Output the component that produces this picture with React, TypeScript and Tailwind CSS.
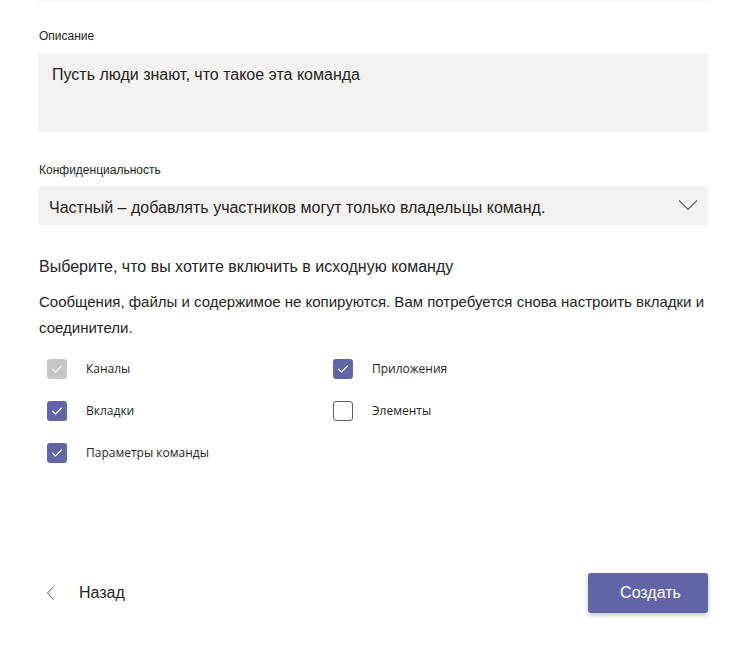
import React from "react";

const Check = ({ color }: { color: string }) => (
  <svg width="12" height="10" viewBox="0 0 12 10" fill="none">
    <path d="M1.5 5.2 L4.5 8 L10.5 2" stroke={color} strokeWidth="1.1" strokeLinecap="round" strokeLinejoin="round" />
  </svg>
);

function Box({ state }: { state: "on" | "off" | "disabled" }) {
  if (state === "on")
    return (
      <div className="w-5 h-5 rounded-[3px] bg-[#6264a7] flex items-center justify-center">
        <Check color="#ffffff" />
      </div>
    );
  if (state === "disabled")
    return (
      <div className="w-5 h-5 rounded-[3px] bg-[#c8c6c4] flex items-center justify-center">
        <Check color="#f3f2f1" />
      </div>
    );
  return <div className="w-5 h-5 rounded-[3px] border border-[#605e5c] bg-white" />;
}

function Item({ state, label }: { state: "on" | "off" | "disabled"; label: string }) {
  return (
    <div className="flex items-center h-5 gap-[19px]">
      <Box state={state} />
      <span className="text-[12px] text-[#252423] font-['Open_Sans',sans-serif]">{label}</span>
    </div>
  );
}

export default function App() {
  return (
    <div className="w-[746px] h-[653px] bg-white relative font-['Liberation_Sans',Arial,sans-serif] text-[#252423]">
      <div className="mx-[38px] h-[3px] bg-[#faf9f8]" />
      <div className="px-[38px]">
        <div className="pt-[25px] text-[12px] leading-[16px] pl-px">Описание</div>
        <div className="mt-[9px] h-[79px] bg-[#f3f2f1] rounded-[3px] pl-[14px] pt-[12px] text-[16px] leading-[20px]">
          Пусть люди знают, что такое эта команда
        </div>
        <div className="mt-[30px] text-[12px] leading-[16px] pl-px">Конфиденциальность</div>
        <div className="mt-[8px] h-[39px] bg-[#f3f2f1] rounded-[3px] pl-[11px] pr-[10px] flex items-center justify-between text-[16px]">
          <span className="pt-[4px]">Частный – добавлять участников могут только владельцы команд.</span>
          <svg width="20" height="12" viewBox="0 0 20 12" fill="none" className="mt-[-2px]">
            <path d="M1 1.5 L10 10.5 L19 1.5" stroke="#605e5c" strokeWidth="1.1" />
          </svg>
        </div>
        <div className="mt-[31px] text-[16px] leading-[22px] pl-px">Выберите, что вы хотите включить в исходную команду</div>
        <div className="mt-[11px] text-[15px] leading-[26px] pl-px">
          Сообщения, файлы и содержимое не копируются. Вам потребуется снова настроить вкладки и соединители.
        </div>
        <div className="mt-[18px] pl-[9px] grid grid-cols-[286px_1fr] gap-y-[22px]">
          <Item state="disabled" label="Каналы" />
          <Item state="on" label="Приложения" />
          <Item state="on" label="Вкладки" />
          <Item state="off" label="Элементы" />
          <Item state="on" label="Параметры команды" />
        </div>
      </div>
      <div className="absolute left-[38px] right-[38px] top-[573px] flex items-center justify-between">
        <div className="flex items-center h-10">
          <svg width="16" height="16" viewBox="0 0 16 16" fill="none" className="ml-[5px]">
            <path d="M10.5 1.5 L4.5 8 L10.5 14.5" stroke="#605e5c" strokeWidth="1" />
          </svg>
          <span className="ml-[20px] text-[16px]">Назад</span>
        </div>
        <button className="w-[120px] h-10 rounded-[3px] bg-[#6264a7] text-white text-[16px] pl-[5px] shadow-[0_2px_4px_rgba(0,0,0,0.25)]">
          Создать
        </button>
      </div>
    </div>
  );
}
